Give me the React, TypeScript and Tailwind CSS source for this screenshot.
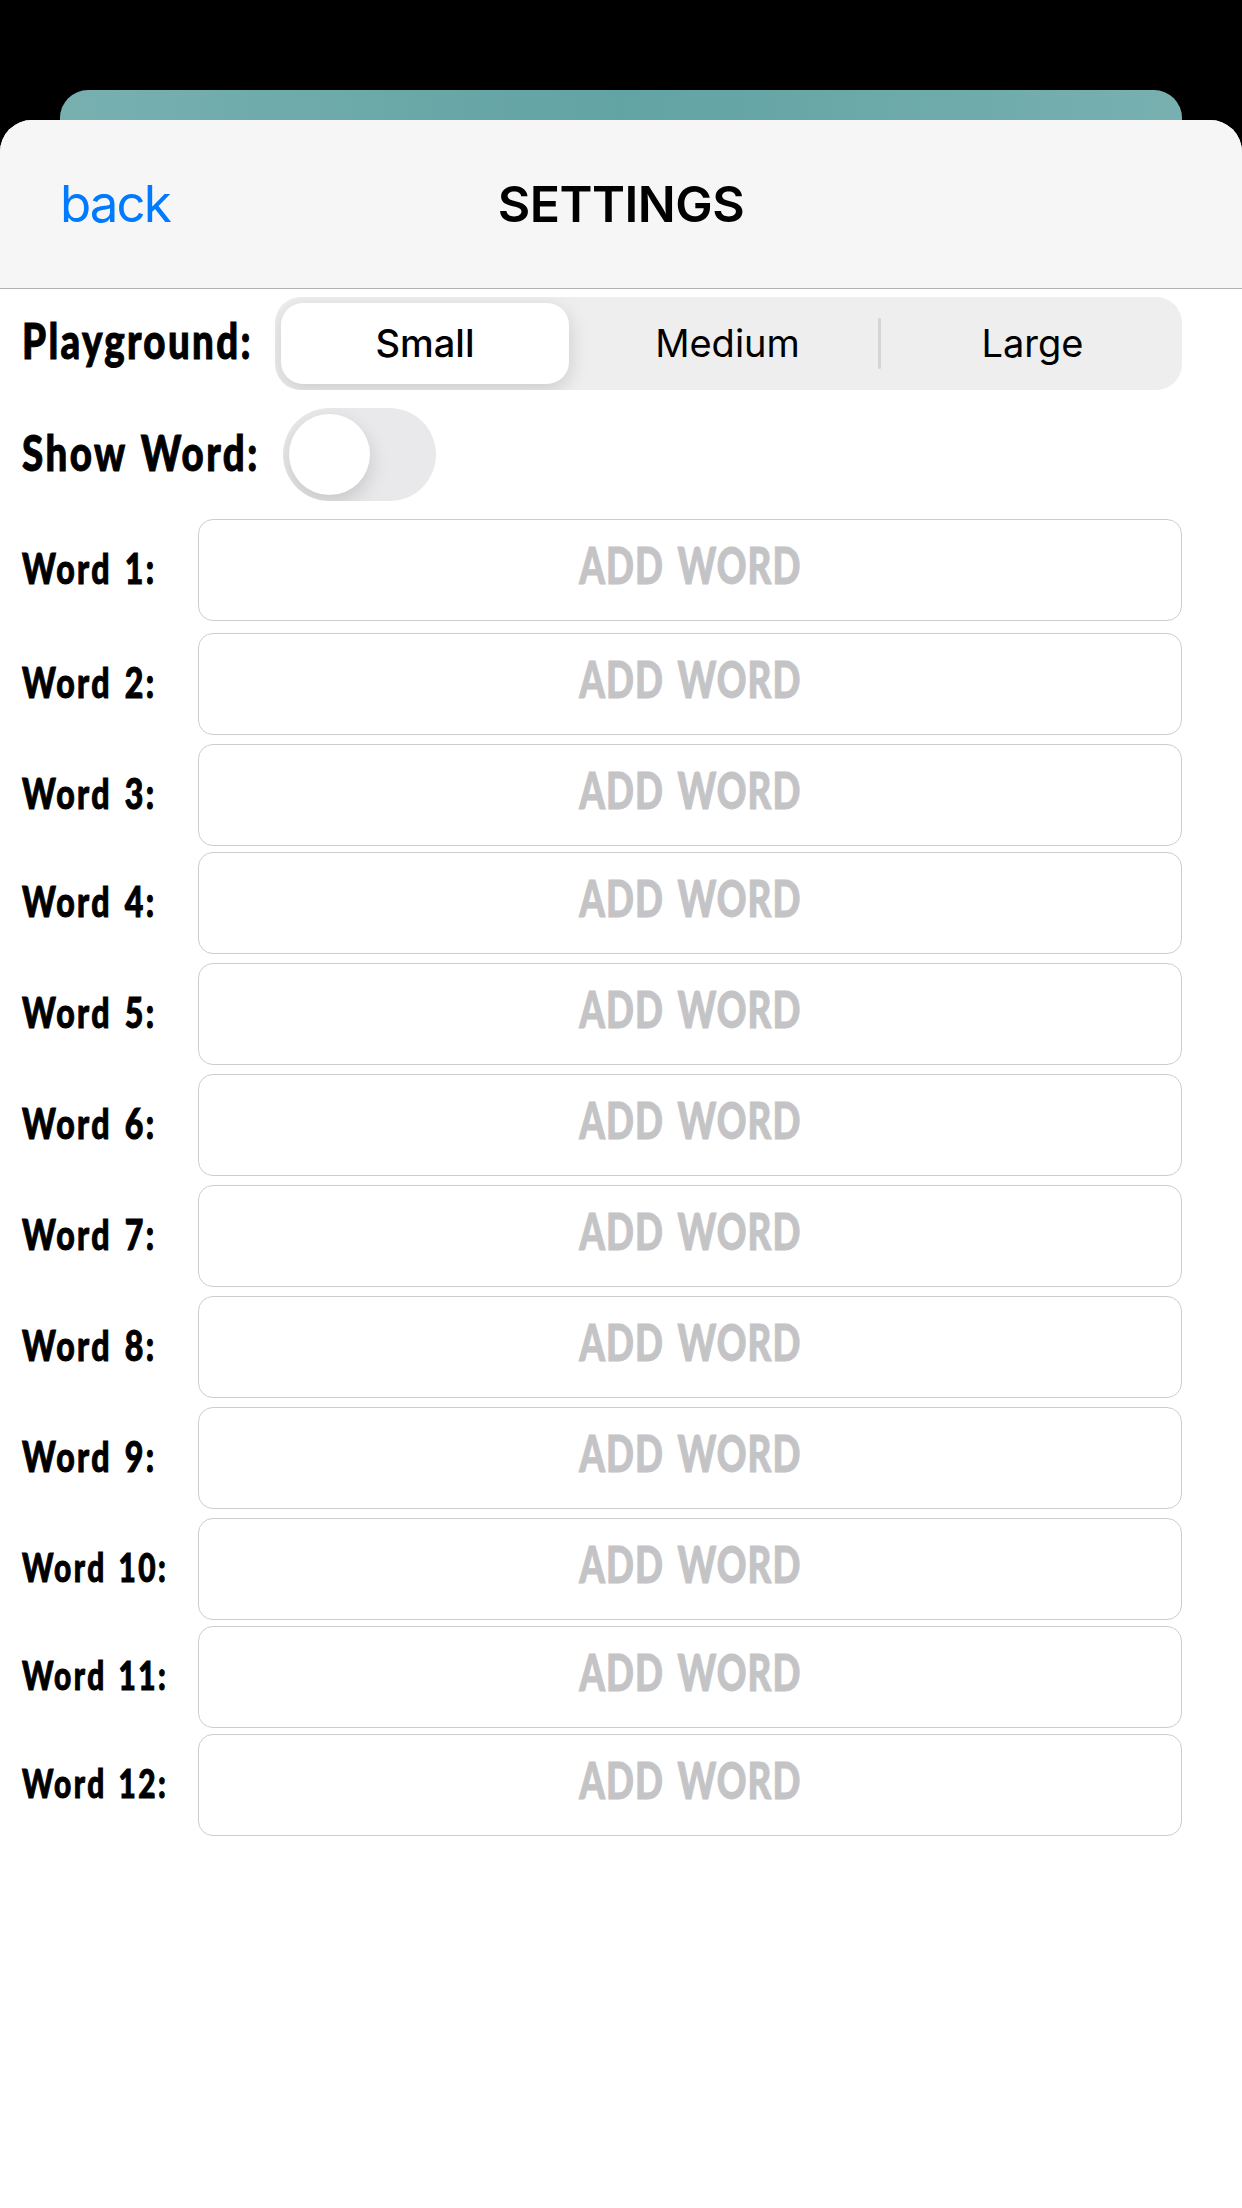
import React from "react";

const words = [
  { n: 1, gap: "mt-[18px]" },
  { n: 2, gap: "mt-3" },
  { n: 3, gap: "mt-[9px]" },
  { n: 4, gap: "mt-1.5" },
  { n: 5, gap: "mt-[9px]" },
  { n: 6, gap: "mt-[9px]" },
  { n: 7, gap: "mt-[9px]" },
  { n: 8, gap: "mt-[9px]" },
  { n: 9, gap: "mt-[9px]" },
  { n: 10, gap: "mt-[9px]" },
  { n: 11, gap: "mt-1.5" },
  { n: 12, gap: "mt-1.5" },
];

const marker =
  "inline-block whitespace-nowrap font-['Marker_Felt','Lato',sans-serif] font-black [-webkit-text-stroke:1px_currentColor] [stroke-linejoin:round]";

function WordRow({ n, gap }: { n: number; gap: string }) {
  return (
    <div className={`flex h-[102px] items-center ${gap}`}>
      <div className="w-[176px] shrink-0">
        <span
          className={`${marker} origin-left leading-none ${
            n > 9
              ? "-translate-y-px scale-x-[0.765] text-[39px] tracking-[3.2px] [word-spacing:3px]"
              : "-translate-y-0.5 scale-x-[0.765] text-[42px] tracking-[3px] [word-spacing:4px]"
          }`}
        >
          Word {n}:
        </span>
      </div>
      <div className="flex h-full grow items-center justify-center rounded-[15px] border border-[#cdcdcd] bg-white">
        <span className={`${marker} -translate-y-1.5 scale-x-[0.72] text-[51px] leading-none tracking-[1.5px] text-[#c4c4c6] [word-spacing:5px]`}>
          ADD WORD
        </span>
      </div>
    </div>
  );
}

export default function App() {
  return (
    <div className="flex h-[2208px] w-[1242px] flex-col overflow-hidden bg-black pt-[90px] font-['Inter',sans-serif] text-black">
      <div className="mx-[60px] h-[30px] shrink-0 rounded-t-[28px] bg-linear-to-r from-[#78b0b0] via-[#62a3a3] to-[#78b0b0]" />
      <div className="flex grow flex-col overflow-hidden rounded-t-[32px] bg-white">
        <header className="grid h-[169px] shrink-0 grid-cols-3 items-center border-b border-[#b2b2b2] bg-[#f6f6f6] px-[60px]">
          <button className="-translate-y-px justify-self-start text-[51px] leading-none tracking-[-1.9px] text-[#007aff]">
            back
          </button>
          <h1 className="justify-self-center text-[50px] leading-none font-semibold tracking-[-0.5px]">SETTINGS</h1>
        </header>
        <main className="flex flex-col pt-2 pr-[60px] pl-[22px]">
          <div className="flex h-[93px] items-center">
            <div className="w-[253px] shrink-0">
              <span className={`${marker} origin-left -translate-y-1 scale-x-[0.77] text-[50px] leading-none tracking-[3px]`}>
                Playground:
              </span>
            </div>
            <div className="flex h-full grow items-center overflow-hidden rounded-[26px] bg-[#eeeeee] pl-1.5">
              <div className="flex h-[81px] w-[288px] items-center justify-center rounded-[22px] bg-white text-[38px] font-medium shadow-[0_6px_20px_rgba(0,0,0,0.15)]">
                Small
              </div>
              <div className="flex w-[309px] items-center justify-center pl-2 text-[38px]">Medium</div>
              <div className="h-[51px] w-[3px] rounded-full bg-[#d5d5d6]" />
              <div className="flex grow items-center justify-center pl-0.5 text-[38px]">Large</div>
            </div>
          </div>
          <div className="mt-[18px] flex h-[93px] items-center">
            <div className="w-[261px] shrink-0">
              <span className={`${marker} origin-left -translate-y-[3px] scale-x-[0.77] text-[50px] leading-none tracking-[3.2px] [word-spacing:3px]`}>
                Show Word:
              </span>
            </div>
            <div className="flex h-[93px] w-[153px] items-center overflow-hidden rounded-full bg-[#e9e9eb] pl-1.5">
              <div className="size-[81px] rounded-full bg-white shadow-[0_8px_20px_rgba(0,0,0,0.15)]" />
            </div>
          </div>
          {words.map((w) => (
            <WordRow key={w.n} {...w} />
          ))}
        </main>
      </div>
    </div>
  );
}
